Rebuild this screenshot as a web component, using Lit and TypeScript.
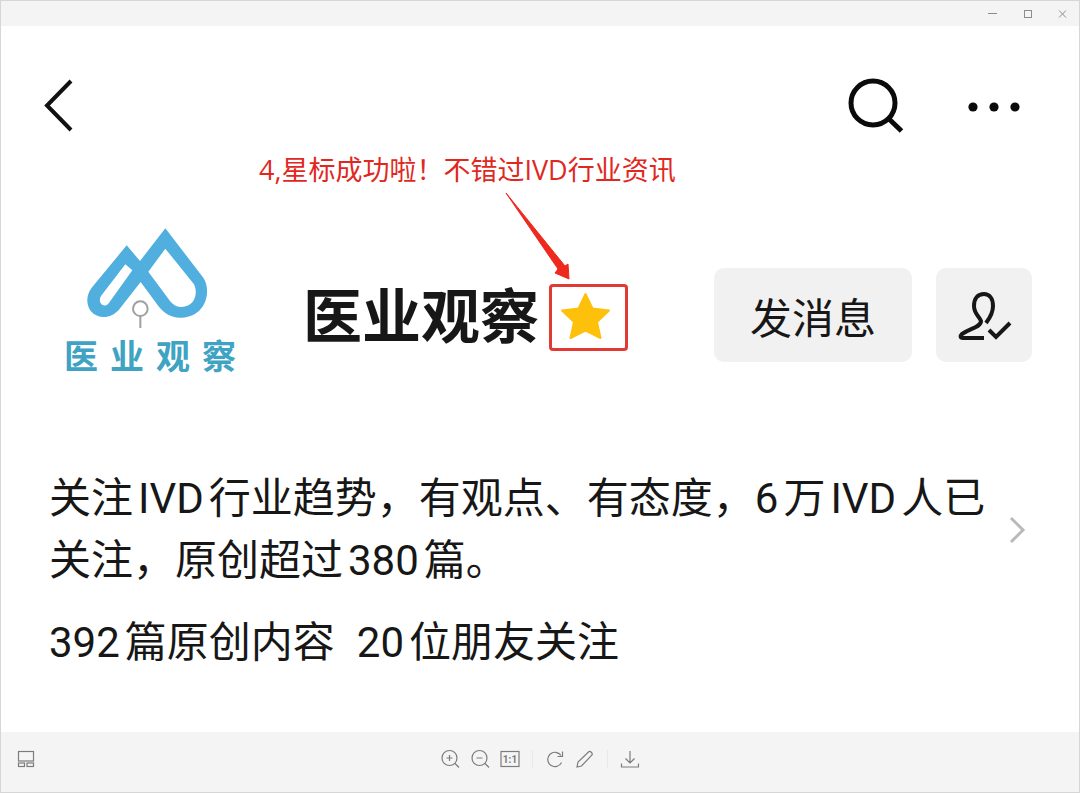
import { LitElement, html, css, svg } from "lit";
import { customElement } from "lit/decorators.js";

@customElement("brand-logo")
class BrandLogo extends LitElement {
  static styles = css`
    :host { display: flex; flex-direction: column; align-items: center; gap: 4px; width: 180px; }
    .mark { display: block; width: 124px; height: 104px; margin-right: 8px; }
    .name {
      display: flex; gap: 12px; color: #3fa3c4; font-weight: 700;
      font-size: 34px; line-height: 46px;
    }
  `;
  render() {
    return html`
      <svg class="mark" viewBox="132 50 372 312" aria-hidden="true">
        <path
          fill="#50afde"
          fill-rule="evenodd"
          d="M376 57L490 205C516 245 498 322 425 325C395 327 372 312 355 290L302 218L238 300C215 328 175 332 152 305C138 285 138 258 155 235L260 108L300 155Z
             M256 165L277 183L205 283C190 298 172 280 183 260Z
             M376 118L462 225C475 250 465 292 425 293C408 293 398 285 390 275L325 187Z"
        />
        <circle cx="301" cy="298" r="22" fill="#fff" stroke="#a0a0a0" stroke-width="6" />
        <path d="M301 320V356" stroke="#a0a0a0" stroke-width="6" />
      </svg>
      <div class="name">${[..."医业观察"].map((c) => html`<span>${c}</span>`)}</div>
    `;
  }
}

const toolIcon = (shape: unknown) => html`
  <svg class="tool-icon" viewBox="0 0 20 20" aria-hidden="true">${shape}</svg>
`;

@customElement("app-root")
class AppRoot extends LitElement {
  static styles = css`
    :host {
      display: block;
      font-family: Roboto, "Noto Sans CJK SC", sans-serif;
      color: #171717;
    }
    * { box-sizing: border-box; }
    button { border: 0; padding: 0; margin: 0; background: none; color: inherit; font: inherit; cursor: pointer; }
    svg { display: block; fill: none; }
    .window {
      display: flex; flex-direction: column; min-height: 100vh;
      border: 1px solid #d6d6d6; background: #fff;
    }
    .titlebar {
      display: flex; justify-content: flex-end; align-items: center; gap: 15px;
      height: 25px; padding-right: 7px; background: #f4f4f4;
    }
    .win-icon { width: 20px; height: 20px; stroke: #8c8c8c; }
    .content { flex: 1; padding: 52px 47px 0 48px; }
    .nav { display: flex; align-items: center; height: 54px; }
    .back { margin-left: -8px; margin-right: auto; }
    .back svg { width: 32px; height: 54px; }
    .search svg { width: 56px; height: 56px; }
    .more { margin-left: 64px; margin-right: 12px; }
    .more svg { width: 52px; height: 54px; }
    .note {
      margin: 18px 0 0 210px; color: #e1281e; white-space: nowrap;
      font-family: "Open Sans", "Noto Sans CJK SC", sans-serif;
      font-size: 27px; line-height: 40px;
    }
    .profile { display: flex; align-items: center; height: 250px; }
    .profile brand-logo { margin: -24px 0 0 11px; }
    .title { margin: 6px 0 0 63px; font-size: 59px; line-height: 72px; font-weight: 700; white-space: nowrap; }
    .star { position: relative; margin: 4px 0 0 10px; border: 3px solid #e23a33; border-radius: 4px; width: 79px; height: 67px; }
    .star-shape { width: 73px; height: 61px; }
    .arrow { position: absolute; left: -47px; top: -94px; width: 70px; height: 90px; pointer-events: none; }
    .actions { display: flex; gap: 24px; margin-left: auto; }
    .action {
      display: flex; align-items: center; justify-content: center;
      height: 94px; border-radius: 10px; background: #f1f1f1;
    }
    .message { width: 198px; font-size: 42px; }
    .following { width: 96px; }
    .following svg { width: 60px; height: 60px; }
    .about { display: flex; align-items: center; gap: 16px; margin-top: 28px; color: inherit; text-decoration: none; }
    .description { flex: 1; margin: 0; font-size: 42px; line-height: 62px; }
    .about svg { width: 24px; height: 32px; flex: none; }
    .stats { margin: 20px 0 0; font-size: 42px; line-height: 62px; }
    .stats .friends { margin-left: 22px; }
    .latin { margin: 0 5px; }
    .lead { margin-left: 0; }
    .toolbar {
      display: grid; grid-template-columns: 1fr auto 1fr; align-items: center;
      height: 60px; padding: 0 15px 6px; background: #f4f4f4;
    }
    .tools { display: flex; align-items: center; gap: 10px; }
    .tool-icon { width: 20px; height: 20px; stroke: #7c7c7c; stroke-width: 1.2; }
    .tool-label { fill: #7c7c7c; stroke: none; font: 700 10px Roboto, sans-serif; }
    .divider { width: 5px; height: 18px; background: linear-gradient(#e9e9e9, #e9e9e9) center / 1px 100% no-repeat; }
  `;

  render() {
    return html`
      <div class="window">
        <header class="titlebar">
          <button aria-label="最小化"><svg class="win-icon" viewBox="0 0 20 20"><path d="M6 9.500H15" /></svg></button>
          <button aria-label="最大化"><svg class="win-icon" viewBox="0 0 20 20"><rect x="7.500" y="6.500" width="7" height="7" /></svg></button>
          <button aria-label="关闭"><svg class="win-icon" viewBox="0 0 20 20"><path d="M7 6.500L14 13.500M14 6.500L7 13.500" /></svg></button>
        </header>

        <main class="content">
          <nav class="nav">
            <button class="back" aria-label="返回">
              <svg viewBox="0 0 32 54"><path d="M30 3L6 27.500L30 52" stroke="#111" stroke-width="4" /></svg>
            </button>
            <button class="search" aria-label="搜索">
              <svg viewBox="0 0 56 56"><g stroke="#0b0b0b" stroke-width="5"><circle cx="25" cy="26" r="22" /><path d="M40.500 41.500L53.500 54" /></g></svg>
            </button>
            <button class="more" aria-label="更多">
              <svg viewBox="0 0 52 54"><g fill="#0b0b0b"><circle cx="5" cy="29" r="4.600" /><circle cx="26" cy="29" r="4.600" /><circle cx="47" cy="29" r="4.600" /></g></svg>
            </button>
          </nav>

          <div class="note">4,星标成功啦！不错过IVD行业资讯</div>

          <section class="profile">
            <brand-logo></brand-logo>
            <h1 class="title">医业观察</h1>
            <div class="star">
              <svg class="star-shape" viewBox="0 0 73 61" role="img" aria-label="星标">
                <path d="M33.500 7L40.500 21.500L57 23.500L45 35L48.500 51L33.500 43.500L18.500 51L22 35L10 23.500L26.500 21.500Z" fill="#fdc10c" stroke="#fdc10c" stroke-width="2" stroke-linejoin="round" />
              </svg>
              <svg class="arrow" viewBox="0 0 70 90" aria-hidden="true">
                <path d="M1 0L60 73L63 71L64 86L50 80L53 76Z" fill="#ee2a1e" stroke="#ee2a1e" />
              </svg>
            </div>
            <div class="actions">
              <button class="action message">发消息</button>
              <button class="action following" aria-label="已关注">
                <svg viewBox="0 0 60 60">
                  <g stroke="#171717" stroke-width="4" stroke-linejoin="round">
                    <path d="M32 38C35 34 39 29 39 21C39 13 35 9 30 9C24 9 20 13 20 21C20 29 26 32 27 36C27 42 17 43 8 49C6 51 6 53 9 53H30" />
                    <path d="M35 45L42 52L56 38" stroke-linejoin="miter" />
                  </g>
                </svg>
              </button>
            </div>
          </section>

          <a class="about" href="#about">
            <p class="description">关注<span class="latin">IVD</span>行业趋势，有观点、有态度，<span class="latin lead">6</span>万<span class="latin">IVD</span>人已关注，原创超过<span class="latin">380</span>篇。</p>
            <svg viewBox="0 0 24 32" aria-hidden="true"><path d="M3 4L15 16L3 28" stroke="#b9b9b9" stroke-width="3" /></svg>
          </a>
          <p class="stats"><span class="latin lead">392</span>篇原创内容<span class="friends"><span class="latin lead">20</span>位朋友关注</span></p>
        </main>

        <footer class="toolbar">
          <div class="tools">
            <button aria-label="缩略图">${toolIcon(svg`<rect x="2.500" y="2.500" width="15" height="9.500" /><rect x="2.500" y="14" width="6" height="3.500" /><rect x="11" y="14" width="6.500" height="3.500" />`)}</button>
          </div>
          <div class="tools">
            <button aria-label="放大">${toolIcon(svg`<circle cx="9.500" cy="9" r="7.500" /><path d="M15 14.500L19 18.500M6.500 9H12.500M9.500 6V12" />`)}</button>
            <button aria-label="缩小">${toolIcon(svg`<circle cx="9.500" cy="9" r="7.500" /><path d="M15 14.500L19 18.500M6.500 9H12.500" />`)}</button>
            <button aria-label="原始大小">${toolIcon(svg`<rect x="1" y="2.500" width="18" height="15" /><text class="tool-label" x="10" y="13.500" text-anchor="middle">1:1</text>`)}</button>
            <span class="divider"></span>
            <button aria-label="旋转">${toolIcon(svg`<path d="M16.500 13.500A7.200 7.200 0 1 1 16 6.500M17.500 2.500V7.500H12.500" />`)}</button>
            <button aria-label="编辑">${toolIcon(svg`<path d="M2 18L3 13L14 2.500Q15 2 16 3L17 4Q17.500 5 17 6L6.500 17Z" />`)}</button>
            <span class="divider"></span>
            <button aria-label="下载">${toolIcon(svg`<path d="M10 2V14M5.500 9.500L10 14L14.500 9.500M1.500 14.500V18H18.500V14.500" />`)}</button>
          </div>
        </footer>
      </div>
    `;
  }
}
